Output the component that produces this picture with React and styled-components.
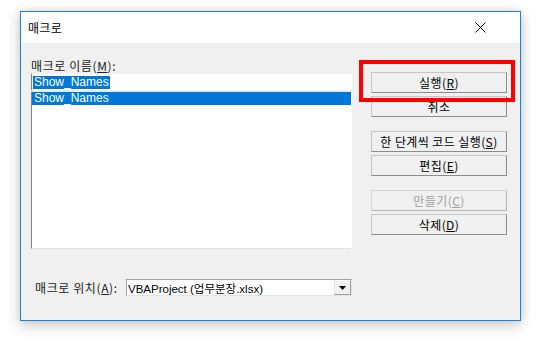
import React from "react";
import styled, { createGlobalStyle } from "styled-components";

const GlobalStyle = createGlobalStyle`
  html, body {
    margin: 0;
    padding: 0;
    background: #ffffff;
  }
  body {
    font-family: "Liberation Sans", "Noto Sans CJK KR", sans-serif;
    font-size: 12px;
    color: #000;
  }
`;

const Page = styled.div`
  width: 548px;
  height: 342px;
  padding: 11px 0 0 20px;
  box-sizing: border-box;
`;

const Dialog = styled.div`
  position: relative;
  width: 501px;
  height: 310px;
  box-sizing: border-box;
  border: 1px solid #1a86d9;
  background: #f0f0f0;
  box-shadow: 0 4px 14px rgba(0, 0, 0, 0.22), 0 0 6px rgba(0, 0, 0, 0.08);
  display: flex;
  flex-direction: column;
`;

const TitleBar = styled.div`
  height: 31px;
  background: #ffffff;
  display: flex;
  align-items: center;
  justify-content: space-between;
  padding: 0 34px 0 7px;
  font-family: "Noto Sans CJK KR", sans-serif;
  font-size: 12px;
  letter-spacing: 0.3px;
`;

const Body = styled.div`
  flex: 1;
  display: flex;
  padding: 0 12px 0 10px;
  gap: 19px;
`;

const LeftCol = styled.div`
  width: 321px;
  display: flex;
  flex-direction: column;
`;

const Label = styled.div`
  height: 17px;
  margin-top: 14px;
  line-height: 17px;
  color: #222;
  font-family: "Noto Sans CJK KR", sans-serif;
  font-size: 12px;
  letter-spacing: 0.6px;
  white-space: nowrap;
`;

const LocationLabel = styled(Label)`
  margin-top: 0;
  width: 82px;
  flex-shrink: 0;
`;

const NameInput = styled.div`
  height: 16px;
  background: #fff;
  border-left: 1px solid #828282;
  display: flex;
  align-items: center;
  padding-left: 1px;
`;

const Selected = styled.span`
  background: #0078d7;
  color: #fff;
  line-height: 13px;
  padding: 0 1px;
`;

const ListBox = styled.div`
  height: 156px;
  margin-top: 1px;
  background: #fff;
  border-left: 1px solid #828282;
  border-bottom: 1px solid #e3e3e3;
  border-top: 1px solid #e3e3e3;
  border-right: 1px solid #fff;
`;

const ListRow = styled.div`
  height: 13px;
  line-height: 13px;
  padding-left: 2px;
  background: ${(p) => (p.$active ? "#0078d7" : "transparent")};
  color: ${(p) => (p.$active ? "#fff" : "#000")};
`;

const LocationRow = styled.div`
  display: flex;
  align-items: center;
  margin-top: 30px;
  padding-left: 4px;
  gap: 9px;
`;

const Select = styled.div`
  width: 227px;
  height: 17px;
  box-sizing: border-box;
  background: #fff;
  border-top: 1px solid #a0a0a0;
  border-left: 1px solid #a0a0a0;
  border-bottom: 1px solid #e3e3e3;
  border-right: 1px solid #e3e3e3;
  display: flex;
  align-items: center;
  justify-content: space-between;
  padding-left: 1px;
  font-size: 11.5px;
`;

const DropButton = styled.div`
  width: 17px;
  height: 15px;
  box-sizing: border-box;
  background: #f0f0f0;
  border-left: 1px solid #e3e3e3;
  border-top: 1px solid #fff;
  border-bottom: 1px solid #a0a0a0;
  border-right: 1px solid #a0a0a0;
  display: flex;
  align-items: center;
  justify-content: center;
`;

const RightCol = styled.div`
  width: 136px;
  display: flex;
  flex-direction: column;
  padding-top: 29px;
`;

const Group = styled.div`
  display: flex;
  flex-direction: column;
  gap: 3px;
  margin-bottom: 14px;
`;

const Button = styled.div`
  height: 21px;
  box-sizing: border-box;
  background: #f0f0f0;
  border-top: 1px solid #c6c6c6;
  border-left: 1px solid #c6c6c6;
  border-right: 1px solid #8c8c8c;
  border-bottom: 1px solid #8c8c8c;
  display: flex;
  align-items: center;
  justify-content: center;
  font-family: "Noto Sans CJK KR", sans-serif;
  font-size: 12px;
  letter-spacing: 0.4px;
  white-space: nowrap;
  color: ${(p) => (p.$disabled ? "#a0a0a0" : "#000")};
  ${(p) =>
    p.$disabled &&
    `border-color: #d4d4d4 #b8b8b8 #b8b8b8 #d4d4d4;`}
  u {
    text-decoration: underline;
    text-underline-offset: 1px;
  }
`;

const Highlight = styled.div`
  position: absolute;
  left: 338px;
  top: 48px;
  width: 156px;
  height: 42px;
  box-sizing: border-box;
  border: 4px solid #ff0000;
  pointer-events: none;
`;

export default function App() {
  return (
    <>
      <GlobalStyle />
      <Page>
        <Dialog>
          <TitleBar>
            <span>매크로</span>
            <svg width="11" height="11" viewBox="0 0 11 11">
              <path d="M0.5 0.5 L10.5 10.5 M10.5 0.5 L0.5 10.5" stroke="#000" strokeWidth="1" />
            </svg>
          </TitleBar>
          <Body>
            <LeftCol>
              <Label>
                매크로 이름(<u>M</u>):
              </Label>
              <NameInput>
                <Selected>Show_Names</Selected>
              </NameInput>
              <ListBox>
                <ListRow $active>Show_Names</ListRow>
              </ListBox>
              <LocationRow>
                <LocationLabel as="span">
                  매크로 위치(<u>A</u>):
                </LocationLabel>
                <Select>
                  <span>VBAProject (업무분장.xlsx)</span>
                  <DropButton>
                    <svg width="7" height="4" viewBox="0 0 7 4">
                      <path d="M0 0 H7 L3.5 4 Z" fill="#000" />
                    </svg>
                  </DropButton>
                </Select>
              </LocationRow>
            </LeftCol>
            <RightCol>
              <Group>
                <Button>
                  실행(<u>R</u>)
                </Button>
                <Button>취소</Button>
              </Group>
              <Group>
                <Button>
                  한 단계씩 코드 실행(<u>S</u>)
                </Button>
                <Button>
                  편집(<u>E</u>)
                </Button>
              </Group>
              <Group>
                <Button $disabled>
                  만들기(<u>C</u>)
                </Button>
                <Button>
                  삭제(<u>D</u>)
                </Button>
              </Group>
            </RightCol>
          </Body>
          <Highlight />
        </Dialog>
      </Page>
    </>
  );
}
